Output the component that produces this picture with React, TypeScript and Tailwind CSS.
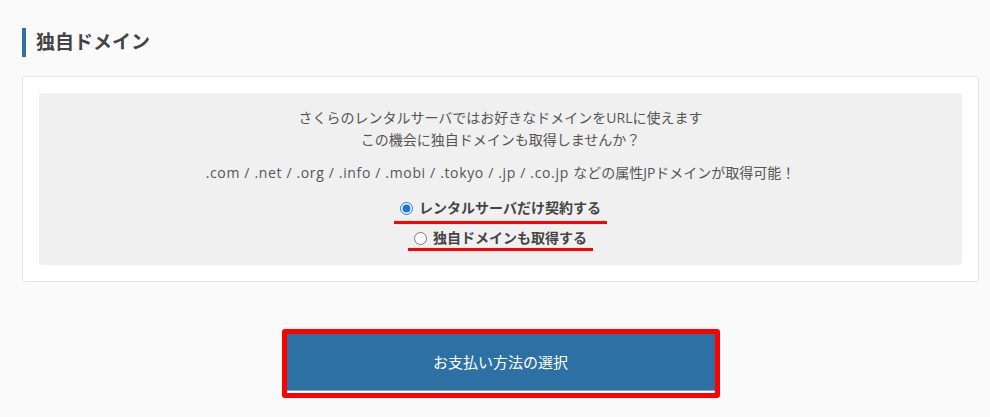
import { useState } from 'react';

const FONT = "font-['Open_Sans','Noto_Sans_CJK_JP',sans-serif]";

export default function App() {
  const [plan, setPlan] = useState<'server' | 'domain'>('server');

  return (
    <div className={`min-h-screen bg-[#fafafa] text-[#555] ${FONT}`}>
      <div className="pl-[22px] pr-[11px] pt-[28px]">
        {/* Section heading */}
        <h2 className="border-l-4 border-[#2c70a4] pl-[10px] text-[19px] font-bold leading-[29px] text-[#444]">
          独自ドメイン
        </h2>

        {/* Card */}
        <div className="mt-[19px] rounded-[3px] border border-[#e4e4e4] bg-white p-4">
          <div className="rounded-[3px] bg-[#f0f0f0] pb-[14px] pt-[14px] text-center text-[14px]">
            <p className="leading-[22px]">
              さくらのレンタルサーバではお好きなドメインをURLに使えます
              <br />
              この機会に独自ドメインも取得しませんか？
            </p>
            <p className="mt-[11px] leading-[22px]">
              <span className="tracking-[0.65px]">
                .com / .net / .org / .info / .mobi / .tokyo / .jp / .co.jp{' '}
              </span>
              などの属性JPドメインが取得可能！
            </p>

            {/* Choices */}
            <div className="mt-[14px] flex flex-col items-center gap-[4px]">
              <label className="flex cursor-pointer items-center gap-[6px] border-b-[3px] border-[#ff0000] px-[6px] pb-[3px] text-[14px] font-bold leading-[20px] text-[#444]">
                <input
                  type="radio"
                  name="plan"
                  className="m-0 h-[13px] w-[13px] accent-[#1a73e8]"
                  checked={plan === 'server'}
                  onChange={() => setPlan('server')}
                />
                レンタルサーバだけ契約する
              </label>
              <label className="flex cursor-pointer items-center gap-[6px] border-b-[3px] border-[#ff0000] px-[6px] pb-[0px] text-[14px] font-bold leading-[20px] text-[#444]">
                <input
                  type="radio"
                  name="plan"
                  className="m-0 h-[13px] w-[13px] accent-[#1a73e8]"
                  checked={plan === 'domain'}
                  onChange={() => setPlan('domain')}
                />
                独自ドメインも取得する
              </label>
            </div>
          </div>
        </div>

        {/* Submit */}
        <div className="mt-[47px] flex justify-center">
          <div className="rounded-[3px] border-[5px] border-[#ff0000] bg-white pb-[2px]">
            <button
              type="button"
              className="flex h-[57px] w-[428px] items-center justify-center border-b border-[#6fa6d4] bg-[#2c70a4] text-[15px] text-white"
            >
              お支払い方法の選択
            </button>
          </div>
        </div>
      </div>
    </div>
  );
}
